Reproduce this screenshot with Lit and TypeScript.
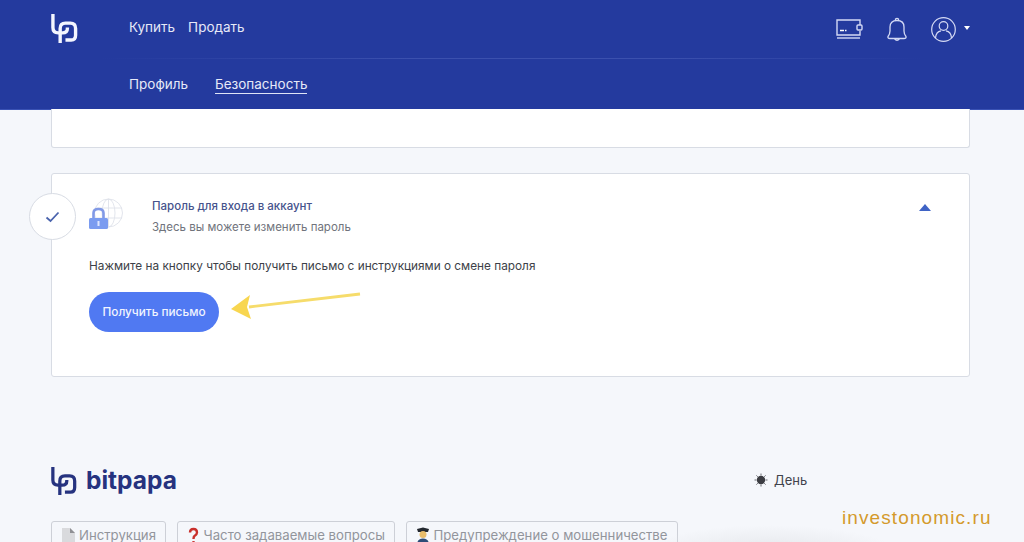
import { html, css, LitElement, svg } from 'lit';
import { customElement } from 'lit/decorators.js';

const logoMark = (color: string, w: number, h: number) => html`<svg width="${w}" height="${h}" viewBox="0 0 28 31" fill="none" stroke="${color}" stroke-width="3.500">
  <path d="M2 1V15Q2 20.500 7.500 20.500H12Q17 20.500 17 16V15"></path>
  <path d="M9.500 31V16Q9.500 10.500 15 10.500H20Q25.500 10.500 25.500 16V23Q25.500 28 21 28H15"></path>
</svg>`;

const globeLines = svg`
  <circle cx="19.500" cy="18" r="14"></circle>
  <ellipse cx="19.500" cy="18" rx="6.500" ry="14"></ellipse>
  <path d="M19.500 4V32M6 13H33M6 23H33"></path>`;

@customElement('app-root')
export class AppRoot extends LitElement {
  static styles = css`
    :host {
      display: block;
      position: relative;
      height: 542px;
      overflow: hidden;
      background: #f5f7fb;
      font-family: Inter, 'Noto Sans', sans-serif;
    }

    .header {
      height: 109px;
      background: #243a9e;
      box-shadow: 0 1px 0 #3a52b4;
      color: #e6e9f8;
      font-size: 13.500px;
    }

    .top {
      height: 59px;
      box-sizing: border-box;
      padding: 11px 54px 0 51px;
      display: flex;
      align-items: flex-start;
      border-bottom: 1px solid;
      border-image: linear-gradient(90deg, #243a9e 10%, #3b50ae 40%, #3b50ae 65%, #243a9e 90%) 1;
    }

    .logo {
      width: 78px;
      height: 32px;
      margin-top: 2px;
    }

    .menu {
      display: flex;
      gap: 13px;
      margin-top: 8px;
      line-height: 16px;
    }

    .actions {
      margin-left: auto;
      display: flex;
      align-items: center;
      height: 36px;
    }

    .wallet {
      margin-right: 24px;
      display: block;
    }

    .bell {
      margin-right: 24px;
      display: block;
    }

    .caret {
      width: 0;
      height: 0;
      margin-left: 8px;
      margin-bottom: 3px;
      border: 3px solid transparent;
      border-top: 4px solid #fff;
      border-bottom: 0;
    }

    .sub {
      display: flex;
      gap: 27px;
      padding: 17px 0 0 129px;
      line-height: 16px;
    }

    .sub .active {
      border-bottom: 1px solid #dfe4f7;
      padding-bottom: 1px;
    }

    .content {
      padding: 0 54px 0 51px;
    }

    .card {
      background: #fff;
      border: 1px solid #d8dce4;
      border-radius: 3px;
      box-sizing: border-box;
    }

    .stub {
      height: 39px;
      border-top: 0;
      border-radius: 0 0 3px 3px;
      margin-bottom: 25px;
    }

    .panel {
      position: relative;
      height: 204px;
      padding: 21px 37px 0;
    }

    .check {
      position: absolute;
      left: -23px;
      top: 19px;
      width: 47px;
      height: 47px;
      box-sizing: border-box;
      border-radius: 50%;
      background: #fff;
      border: 1px solid #d8dce4;
      display: flex;
      align-items: center;
      justify-content: center;
    }

    .title-row {
      display: flex;
      align-items: flex-start;
    }

    .lock {
      width: 63px;
      height: 36px;
      flex: none;
    }

    .title {
      font-size: 11.500px;
      line-height: 16px;
      font-weight: 500;
      color: #46538c;
      margin-top: 3px;
    }

    .desc {
      font-size: 11.500px;
      line-height: 16px;
      color: #70737c;
      margin-top: 5px;
    }

    .chevron {
      position: absolute;
      right: 38px;
      top: 30px;
      width: 0;
      height: 0;
      border-left: 6.500px solid transparent;
      border-right: 6.500px solid transparent;
      border-bottom: 7px solid #3f63c5;
    }

    .note {
      font-size: 11.800px;
      line-height: 16px;
      color: #3d3f48;
      margin-top: 23px;
    }

    .button {
      display: block;
      margin-top: 18px;
      width: 130px;
      height: 40px;
      border: 0;
      padding: 0;
      border-radius: 20px;
      background: #5079f2;
      color: #f1f4ff;
      font: 500 11.800px Inter, 'Noto Sans', sans-serif;
    }

    .arrow {
      position: absolute;
      left: 177px;
      top: 118px;
    }

    .footer {
      padding: 88px 0 0 51px;
    }

    .brand-row {
      display: flex;
      align-items: center;
      height: 30px;
    }

    .brand {
      display: flex;
      align-items: center;
      gap: 9px;
      width: 703px;
      color: #26337f;
      font: 700 24.500px/30px Inter, sans-serif;
    }

    .theme {
      display: flex;
      align-items: center;
      gap: 6px;
      font-size: 13px;
      color: #41434b;
    }

    .links {
      display: flex;
      gap: 11.500px;
      margin-top: 26px;
    }

    .link {
      height: 30px;
      box-sizing: border-box;
      border: 1px solid #cdd0d7;
      border-radius: 3px;
      padding: 4px 9px 0 9px;
      display: flex;
      gap: 3px;
      font-size: 13.200px;
      line-height: 18px;
      color: #92959c;
      white-space: nowrap;
    }

    .link svg {
      flex: none;
      margin-top: 1px;
    }

    .watermark {
      position: absolute;
      left: 842px;
      top: 507px;
      font: 19px/22px 'Liberation Sans', sans-serif;
      letter-spacing: 1.100px;
      color: #d49a2c;
    }

    .haze {
      position: absolute;
      left: 640px;
      top: 525px;
      width: 260px;
      height: 60px;
      background: radial-gradient(closest-side, #e3e5e9, transparent);
    }
  `;

  render() {
    return html`
      <div class="header">
        <div class="top">
          <div class="logo">${logoMark('#f4f6ff', 27, 30)}</div>
          <div class="menu"><span>Купить</span><span>Продать</span></div>
          <div class="actions">
            <svg class="wallet" width="27" height="20" viewBox="0 0 27 20" fill="none" stroke="#d3d9f5" stroke-width="1.400">
              <path d="M24 6V1H1V16H24V12"></path>
              <path d="M1 19H24"></path>
              <rect x="21" y="6" width="5" height="5" rx="1"></rect>
              <path d="M4 11.500H8" stroke="#fff" stroke-width="1.500"></path>
              <path d="M9 11.500H10.500" stroke="#fff" stroke-width="1.500"></path>
            </svg>
            <svg class="bell" width="20" height="25" viewBox="0 0 20 25" fill="none" stroke="#d3d9f5" stroke-width="1.300">
              <path d="M8.500 3.500V2Q10 0.800 11.500 2V3.500"></path>
              <path d="M3 14V10Q3 3.500 10 3.500Q17 3.500 17 10V14Q17 17 19 19.500Q19.500 21.500 17 21.500H3Q0.500 21.500 1 19.500Q3 17 3 14Z"></path>
              <path d="M7.500 21.500Q10 25 12.500 21.500"></path>
            </svg>
            <svg width="25" height="25" viewBox="0 0 25 25" fill="none" stroke="#d5daf4" stroke-width="1.200">
              <circle cx="12.500" cy="12.500" r="11.800"></circle>
              <circle cx="12.500" cy="9" r="4.300"></circle>
              <path d="M4.500 21Q5 14.500 10 13.800M20.500 21Q20 14.500 15 13.800"></path>
            </svg>
            <div class="caret"></div>
          </div>
        </div>
        <div class="sub"><span>Профиль</span><span class="active">Безопасность</span></div>
      </div>

      <div class="content">
        <div class="card stub"></div>
        <div class="card panel">
          <div class="check">
            <svg width="15" height="12" viewBox="0 0 15 12" fill="none" stroke="#4a63ad" stroke-width="1.800">
              <path d="M1.500 6.500L5.500 10L13.500 1.500"></path>
            </svg>
          </div>
          <div class="title-row">
            <svg class="lock" viewBox="0 0 63 36">
              <g fill="none" stroke="#dfe2ea" stroke-width="0.900">${globeLines}</g>
              <path d="M4.500 23V18Q4.500 14 9.500 14Q14.500 14 14.500 18V23" fill="none" stroke="#8199e6" stroke-width="2.600"></path>
              <rect x="0" y="23" width="19" height="11" rx="1.500" fill="#7b9cf0"></rect>
              <rect x="8.500" y="26" width="2" height="5" fill="#dfe7ff"></rect>
            </svg>
            <div>
              <div class="title">Пароль для входа в аккаунт</div>
              <div class="desc">Здесь вы можете изменить пароль</div>
            </div>
          </div>
          <div class="chevron"></div>
          <div class="note">Нажмите на кнопку чтобы получить письмо с инструкциями о смене пароля</div>
          <button class="button">Получить письмо</button>
          <svg class="arrow" width="132" height="32" viewBox="0 0 132 32">
            <path d="M131 2L20 15" stroke="#f6dc6b" stroke-width="2.800" fill="none"></path>
            <path d="M2 17L21 3L18 15L22 27Z" fill="#f8d650"></path>
          </svg>
        </div>
      </div>

      <div class="footer">
        <div class="brand-row">
          <div class="brand">${logoMark('#26337f', 26, 29)}<span>bitpapa</span></div>
          <div class="theme">
            <svg width="14" height="14" viewBox="0 0 14 14">
              <circle cx="7" cy="7" r="4.200" fill="#3c3d42"></circle>
              <path d="M7 0.500V2.500M7 11.500V13.500M0.500 7H2.500M11.500 7H13.500M2.400 2.400L3.800 3.800M10.200 10.200L11.600 11.600M2.400 11.600L3.800 10.200M10.200 3.800L11.600 2.400" stroke="#6b6c72" stroke-width="1"></path>
            </svg>
            <span>День</span>
          </div>
        </div>
        <div class="links">
          <div class="link">
            <svg width="15" height="18" viewBox="0 0 15 18">
              <path d="M1 1H9L14 6V17H1Z" fill="#d9dadd"></path>
              <path d="M9 1L14 6H9Z" fill="#8f9094"></path>
            </svg>
            <span>Инструкция</span>
          </div>
          <div class="link">
            <svg width="13" height="18" viewBox="0 0 13 18" fill="none">
              <path d="M3 5.500Q3 2 6.500 2Q10 2 10 5.500Q10 7.500 7.500 9Q6.500 9.800 6.500 12" stroke="#c9302c" stroke-width="2.400"></path>
              <circle cx="6.500" cy="15.500" r="1.600" fill="#c9302c"></circle>
            </svg>
            <span>Часто задаваемые вопросы</span>
          </div>
          <div class="link">
            <svg width="14" height="18" viewBox="0 0 14 18">
              <path d="M1 2L7 0.500L13 2L12 5H2Z" fill="#23282f"></path>
              <circle cx="7" cy="7.500" r="3.500" fill="#e9bd6b"></circle>
              <path d="M1 18Q1 11.500 7 11.500Q13 11.500 13 18Z" fill="#2d4c78"></path>
            </svg>
            <span>Предупреждение о мошенничестве</span>
          </div>
        </div>
      </div>

      <div class="haze"></div>
      <div class="watermark">investonomic.ru</div>
    `;
  }
}
